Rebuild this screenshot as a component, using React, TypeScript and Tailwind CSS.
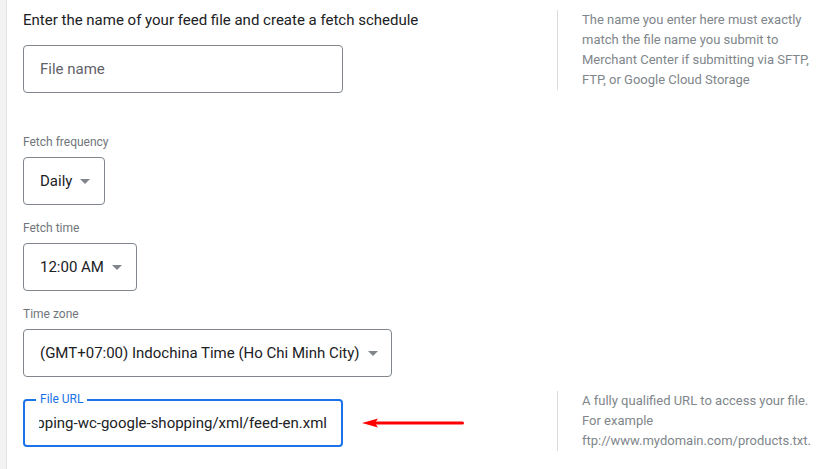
import React from "react";

function Caret() {
  return (
    <svg width="10" height="5" viewBox="0 0 10 5" className="shrink-0">
      <path d="M0 0 L10 0 L5 5 Z" fill="#80868b" />
    </svg>
  );
}

interface SelectBoxProps {
  label: string;
  value: string;
  width: string;
  labelGap: string;
}

function SelectBox({ label, value, width, labelGap }: SelectBoxProps) {
  return (
    <div className={labelGap}>
      <div className="text-xs leading-4 text-[#70757a]">{label}</div>
      <div
        className={`mt-[7px] h-12 ${width} flex items-center gap-2 rounded border border-[#80868b] pl-4 text-[15px] text-[#202124]`}
      >
        <span className="whitespace-nowrap">{value}</span>
        <Caret />
      </div>
    </div>
  );
}

function RedArrow() {
  return (
    <svg width="104" height="10" viewBox="0 0 104 10" className="ml-[19px] shrink-0">
      <path d="M0 5 L16 0.5 L13 5 L16 9.5 Z" fill="#f00" />
      <rect x="12" y="3.5" width="90" height="3" rx="1.5" fill="#f00" />
    </svg>
  );
}

export default function App() {
  const url = "hopping-wc-google-shopping/xml/feed-en.xml";

  return (
    <div
      className="flex h-[469px] w-[839px] overflow-hidden bg-white"
      style={{ fontFamily: "Roboto, 'Noto Sans', sans-serif" }}
    >
      {/* left gutter */}
      <div className="w-[7px] shrink-0 border-r border-[#e6e6e6] bg-[#f3f3f3]" />

      <div className="flex-1 pl-4 pt-[10px]">
        {/* file name row */}
        <div className="flex items-start">
          <div className="w-[534px] shrink-0">
            <div className="text-[15px] leading-5 text-[#202124]">
              Enter the name of your feed file and create a fetch schedule
            </div>
            <div className="mt-[15px] flex h-12 w-[320px] items-center rounded border border-[#80868b] px-4 text-[15px] text-[#5f6368]">
              File name
            </div>
          </div>
          <div className="border-l border-[#dadce0] pl-6 text-[13px] leading-5 text-[#80868b]">
            The name you enter here must exactly
            <br />
            match the file name you submit to
            <br />
            Merchant Center if submitting via SFTP,
            <br />
            FTP, or Google Cloud Storage
          </div>
        </div>

        <SelectBox label="Fetch frequency" value="Daily" width="w-[82px]" labelGap="mt-[41px]" />
        <SelectBox label="Fetch time" value="12:00 AM" width="w-[114px]" labelGap="mt-[15px]" />
        <SelectBox
          label="Time zone"
          value="(GMT+07:00) Indochina Time (Ho Chi Minh City)"
          width="w-[369px]"
          labelGap="mt-[15px]"
        />

        {/* file url row */}
        <div className="mt-[14px] flex items-start">
          <div className="flex w-[534px] shrink-0 items-center pt-2">
            <div className="relative h-12 w-[320px] rounded border-2 border-[#1a73e8]">
              <span className="absolute left-[11px] top-[-10px] bg-white px-1 text-xs leading-4 text-[#1a73e8]">
                File URL
              </span>
              <div className="mx-[14px] flex h-full items-center justify-end overflow-hidden">
                <span className="shrink-0 whitespace-nowrap text-[15px] text-[#202124]">{url}</span>
              </div>
            </div>
            <RedArrow />
          </div>
          <div className="border-l border-[#dadce0] pl-6 text-[13px] leading-5 text-[#80868b]">
            A fully qualified URL to access your file.
            <br />
            For example
            <br />
            ftp://www.mydomain.com/products.txt.
          </div>
        </div>
      </div>
    </div>
  );
}
